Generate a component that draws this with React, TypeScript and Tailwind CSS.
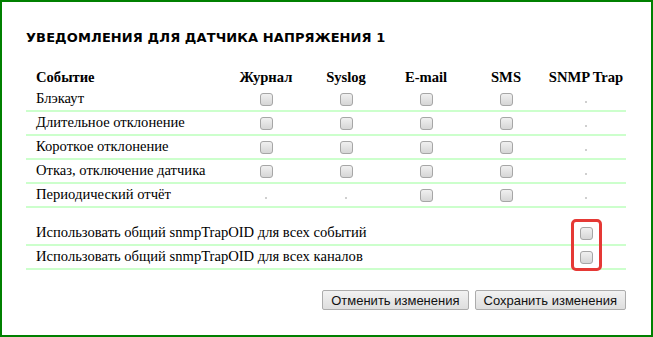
import React from 'react'

type Cell = 'box' | 'dot'

const events: Array<{ label: string; cells: Cell[] }> = [
  { label: 'Блэкаут', cells: ['box', 'box', 'box', 'box', 'dot'] },
  { label: 'Длительное отклонение', cells: ['box', 'box', 'box', 'box', 'dot'] },
  { label: 'Короткое отклонение', cells: ['box', 'box', 'box', 'box', 'dot'] },
  { label: 'Отказ, отключение датчика', cells: ['box', 'box', 'box', 'box', 'dot'] },
  { label: 'Периодический отчёт', cells: ['dot', 'dot', 'box', 'box', 'dot'] },
]

const channels = ['Журнал', 'Syslog', 'E-mail', 'SMS', 'SNMP Trap']

function Checkbox() {
  return (
    <span className="inline-block w-[13px] h-[13px] rounded-[3px] border border-[#a6a6a6] bg-gradient-to-b from-[#f0f0f0] to-[#d6d6d6]" />
  )
}

function Dot() {
  return <span className="inline-block w-[2px] h-[2px] mt-[5px] bg-[#cfcfcf]" />
}

function Button({ children }: { children: React.ReactNode }) {
  return (
    <button className="h-[20px] px-[8px] border border-[#acacac] rounded-[2px] bg-gradient-to-b from-[#f2f2f2] to-[#dedede] text-[13px] leading-none text-[#111]">
      {children}
    </button>
  )
}

export default function App() {
  return (
    <div className="w-[653px] h-[337px] border-2 border-[#008000] bg-white pl-[24px] pr-[25px] pt-[27px] font-['Liberation_Serif',serif] text-black">
      <h1 className="font-['DejaVu_Sans',sans-serif] font-bold text-[13px] leading-[18px] tracking-[0.1px]">
        УВЕДОМЛЕНИЯ ДЛЯ ДАТЧИКА НАПРЯЖЕНИЯ 1
      </h1>

      <div className="mt-[20px] text-[14.6px]">
        <div className="flex h-[21px] items-center font-bold">
          <div className="w-[200px] pl-[10px]">Событие</div>
          {channels.map((c) => (
            <div key={c} className="w-[80px] text-center">
              {c}
            </div>
          ))}
        </div>

        {events.map((ev) => (
          <div key={ev.label} className="flex h-[24px] items-center border-b-2 border-[#ccffcc]">
            <div className="w-[200px] pl-[10px]">{ev.label}</div>
            {ev.cells.map((cell, i) => (
              <div key={i} className="w-[80px] flex justify-center">
                {cell === 'box' ? <Checkbox /> : <Dot />}
              </div>
            ))}
          </div>
        ))}

        <div className="mt-[14px] flex">
          <div className="flex-1">
            <div className="h-[24px] flex items-center pl-[10px] border-b-2 border-[#ccffcc]">
              Использовать общий snmpTrapOID для всех событий
            </div>
            <div className="h-[24px] flex items-center pl-[10px] border-b-2 border-[#ccffcc]">
              Использовать общий snmpTrapOID для всех каналов
            </div>
          </div>
          <div className="relative w-[80px] border-b-2 border-[#ccffcc]">
            <div className="h-[24px] flex items-center justify-center border-b-2 border-[#ccffcc]">
              <Checkbox />
            </div>
            <div className="h-[22px] flex items-center justify-center">
              <Checkbox />
            </div>
            <div className="absolute left-[25px] top-[-3px] w-[31px] h-[52px] border-[3px] border-[#e53935] rounded-[5px]" />
          </div>
        </div>

        <div className="mt-[20px] flex justify-end gap-[6px] font-['Liberation_Sans',Arial,sans-serif]">
          <Button>Отменить изменения</Button>
          <Button>Сохранить изменения</Button>
        </div>
      </div>
    </div>
  )
}
